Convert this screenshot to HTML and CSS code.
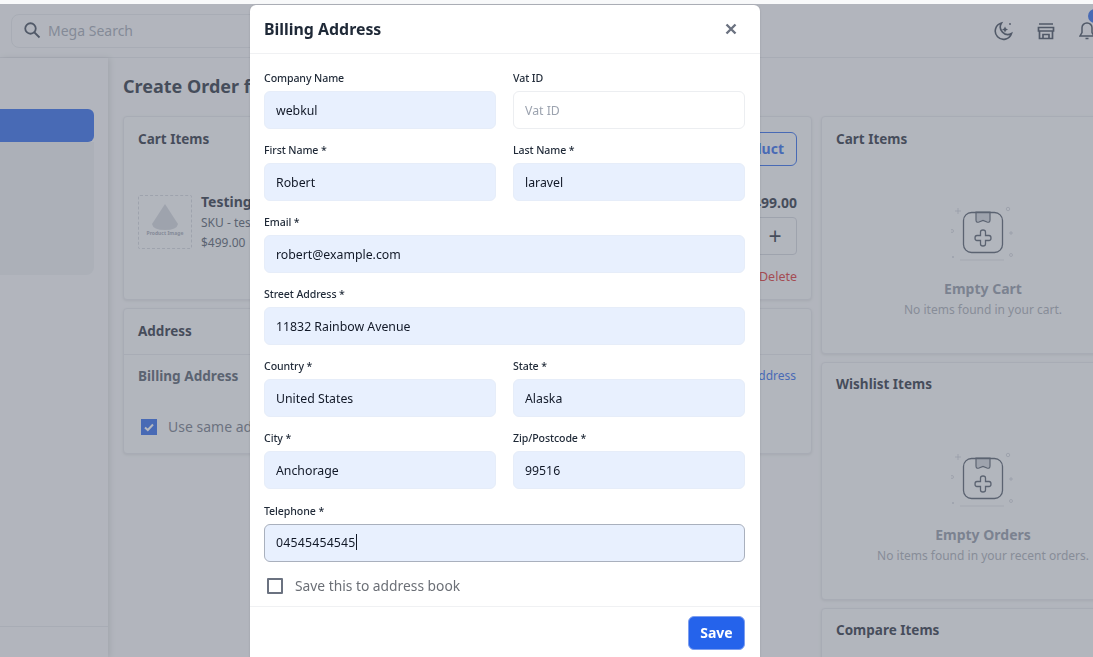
FILE: index.html
```html
<!DOCTYPE html>
<html lang="en">
<head>
  <meta charset="UTF-8">
  <meta name="viewport" content="width=device-width, initial-scale=1">
  <title>Create Order</title>
  <link rel="stylesheet" href="styles.css">
</head>
<body>
  <svg class="defs" width="0" height="0">
    <symbol id="empty-icon" viewBox="0 0 64 64">
      <g fill="none" stroke="#9ca3af" stroke-width="0.7" opacity="0.6">
        <path d="M7 6v6M4 9h6"/>
        <circle cx="57" cy="7" r="1.7"/>
        <circle cx="1" cy="29" r="1.5"/>
        <path d="M60 29v4M58 31h4"/>
        <circle cx="60" cy="53" r="1.5"/>
        <path d="M2 54v2M1 55h2"/>
      </g>
      <path d="M9 58h44" stroke="#e5e7eb" stroke-width="1.5" fill="none"/>
      <path d="M25 10h14v8q0 3-3 2l-4-1.500-4 1.500q-3 1-3-2z" fill="#d1d5db" stroke="#4b5563" stroke-width="1.200"/>
      <rect x="12.500" y="10.500" width="39" height="40" rx="8" fill="none" stroke="#4b5563" stroke-width="1.300"/>
      <path d="M29.500 30q0-2 2.500-2t2.500 2v3.500h3.500q2 0 2 2.500t-2 2.500h-3.500v3.500q0 2-2.500 2t-2.500-2v-3.500h-3.500q-2 0-2-2.500t2-2.500h3.500z" fill="none" stroke="#4b5563" stroke-width="1.300"/>
    </symbol>
  </svg>

  <div class="page">
    <header class="topbar">
      <div class="search">
        <svg width="18" height="18" viewBox="0 0 24 24" fill="none" stroke="#374151" stroke-width="2.400"><circle cx="10" cy="10" r="7"/><path d="M15 15l7 7"/></svg>
        <span>Mega Search</span>
      </div>
      <div class="topbar-icons">
        <svg width="20" height="20" viewBox="0 0 20 20" fill="none" stroke="#374151" stroke-width="1.600"><path d="M8.500 2a8.300 8.300 0 1 0 10 10.500A7.500 7.500 0 0 1 8.500 2z"/><path d="M12 5.500l1 2 2 1-2 1-1 2-1-2-2-1 2-1z" fill="#374151" stroke="none"/><circle cx="17" cy="3" r="0.900" fill="#374151" stroke="none"/></svg>
        <svg width="18" height="18" viewBox="0 0 18 18" fill="none" stroke="#374151" stroke-width="1.700"><path d="M2 2h14M1.500 5.500h15v3.500h-15zM2.500 9v7.500h13V9M6 16.500v-4h6v4"/></svg>
        <span class="bell">
          <svg width="16" height="20" viewBox="0 0 16 20" fill="none" stroke="#374151" stroke-width="1.500"><path d="M8 2a4.800 4.800 0 0 0-5 5v4.500L1 15h14l-2-3.500V7a4.800 4.800 0 0 0-5-5z"/><path d="M6.500 17.500h3"/></svg>
          <i class="badge"></i>
        </span>
      </div>
    </header>

    <div class="layout">
      <aside class="sidebar">
        <div class="menu">
          <div class="menu-active"></div>
          <div class="menu-sub"></div>
        </div>
        <div class="sidebar-foot"></div>
      </aside>

      <main class="content">
        <h1>Create Order for</h1>
        <div class="columns">
          <div class="col">
            <section class="card cart-card">
              <div class="cart-head">
                <h2>Cart Items</h2>
                <a class="btn-outline">Add Product</a>
              </div>
              <div class="cart-item">
                <div class="thumb">
                  <svg width="30" height="26" viewBox="0 0 30 26"><path d="M15 0L28 20q-1 6-13 6T2 20z" fill="#d1d5db"/></svg>
                  <span>Product Image</span>
                </div>
                <div class="item-info">
                  <strong>Testing</strong>
                  <span>SKU - test</span>
                  <span>$499.00</span>
                </div>
                <div class="item-side">
                  <strong>$499.00</strong>
                  <div class="stepper"><span></span><span>+</span></div>
                  <a class="delete">Delete</a>
                </div>
              </div>
            </section>

            <section class="card address-card">
              <h2 class="address-title">Address</h2>
              <div class="address-body">
                <div class="address-row">
                  <b>Billing Address</b>
                  <a>Add Address</a>
                </div>
                <div class="same-row">
                  <span class="checked"><svg width="12" height="12" viewBox="0 0 12 12" fill="none" stroke="#fff" stroke-width="2"><path d="M2 6.500l2.800 2.500L10 3.500"/></svg></span>
                  <span>Use same addr</span>
                </div>
              </div>
            </section>
          </div>

          <div class="col">
            <section class="card side-card">
              <h2>Cart Items</h2>
              <div class="empty">
                <svg width="64" height="64"><use href="#empty-icon"/></svg>
                <b>Empty Cart</b>
                <span>No items found in your cart.</span>
              </div>
            </section>
            <section class="card side-card">
              <h2>Wishlist Items</h2>
              <div class="empty">
                <svg width="64" height="64"><use href="#empty-icon"/></svg>
                <b>Empty Orders</b>
                <span>No items found in your recent orders.</span>
              </div>
            </section>
            <section class="card side-card">
              <h2>Compare Items</h2>
            </section>
          </div>
        </div>
      </main>
    </div>
  </div>

  <div class="overlay"></div>

  <form class="modal">
    <div class="modal-head">
      <h3>Billing Address</h3>
      <svg width="12" height="12" viewBox="0 0 12 12" stroke="#6b7280" stroke-width="2.400" fill="none"><path d="M1.500 1.500l9 9M10.500 1.500l-9 9"/></svg>
    </div>

    <div class="modal-body">
      <div class="field">
        <label>Company Name</label>
        <input class="filled" type="text" value="webkul">
      </div>
      <div class="field">
        <label>Vat ID</label>
        <input type="text" placeholder="Vat ID">
      </div>
      <div class="field">
        <label>First Name *</label>
        <input class="filled" type="text" value="Robert">
      </div>
      <div class="field">
        <label>Last Name *</label>
        <input class="filled" type="text" value="laravel">
      </div>
      <div class="field wide">
        <label>Email *</label>
        <input class="filled" type="text" value="robert@example.com">
      </div>
      <div class="field wide">
        <label>Street Address *</label>
        <input class="filled" type="text" value="11832 Rainbow Avenue">
      </div>
      <div class="field">
        <label>Country *</label>
        <input class="filled" type="text" value="United States">
      </div>
      <div class="field">
        <label>State *</label>
        <input class="filled" type="text" value="Alaska">
      </div>
      <div class="field">
        <label>City *</label>
        <input class="filled" type="text" value="Anchorage">
      </div>
      <div class="field">
        <label>Zip/Postcode *</label>
        <input class="filled" type="text" value="99516">
      </div>
      <div class="field wide">
        <label>Telephone *</label>
        <div class="focused">04545454545<i class="caret"></i></div>
      </div>
      <div class="save-row wide">
        <span class="box"></span>
        <span>Save this to address book</span>
      </div>
    </div>

    <div class="modal-foot">
      <button type="button">Save</button>
    </div>
  </form>
</body>
</html>
```

FILE: styles.css
```css
* {
  box-sizing: border-box;
}
html, body {
  height: 100%;
}
body {
  margin: 0;
  overflow: hidden;
  background: #f8f9fa;
  font-family: "Noto Sans", Arial, sans-serif;
  color: #111827;
}
h1, h2, h3 {
  margin: 0;
}
.defs {
  position: absolute;
}
.page {
  width: 1160px;
  margin-top: 4px;
}

/* top bar */
.topbar {
  display: flex;
  justify-content: space-between;
  align-items: center;
  height: 54px;
  padding: 0 65px 0 11px;
  border-bottom: 1px solid #e5e7eb;
}
.search {
  display: flex;
  align-items: center;
  gap: 7px;
  width: 400px;
  height: 34px;
  padding: 0 0 1px 11px;
  border: 1px solid #e5e7eb;
  border-radius: 8px;
  font-size: 14px;
  color: #9ca3af;
}
.topbar-icons {
  display: flex;
  align-items: center;
  gap: 24px;
}
.bell {
  position: relative;
  display: flex;
}
.badge {
  position: absolute;
  top: -12px;
  left: 9px;
  width: 14px;
  height: 14px;
  border-radius: 50%;
  background: #2563eb;
}

/* sidebar */
.layout {
  display: flex;
  height: 600px;
}
.sidebar {
  display: flex;
  flex-direction: column;
  justify-content: space-between;
  flex: none;
  width: 108px;
  padding-top: 51px;
  box-shadow: 2px 0 6px rgba(0,0,0,0.12);
}
.menu {
  width: 94px;
}
.menu-active {
  height: 33px;
  background: #2563eb;
  border-radius: 0 6px 6px 0;
}
.menu-sub {
  height: 133px;
  background: #eceef1;
  border-radius: 0 0 8px 0;
}
.sidebar-foot {
  height: 32px;
  border-top: 1px solid #e5e7eb;
}

/* main area */
.content {
  flex: 1;
  padding: 15px 15px 0;
}
h1 {
  font-size: 18px;
  font-weight: 700;
  line-height: 26px;
  white-space: nowrap;
  color: #1f2937;
}
.columns {
  display: grid;
  grid-template-columns: 689px 324px;
  gap: 9px;
  margin-top: 17px;
}
.col {
  display: flex;
  flex-direction: column;
  gap: 8px;
}
.card {
  padding: 13px 14px;
  background: #f9fafb;
  border: 1px solid #e5e7eb;
  border-radius: 4px;
  box-shadow: 0 1px 3px rgba(0,0,0,0.1);
}
h2 {
  font-size: 13.500px;
  font-weight: 700;
  line-height: 18px;
  color: #1f2937;
}
.cart-card {
  height: 184px;
}
.cart-head {
  display: flex;
  justify-content: space-between;
  align-items: flex-start;
}
.btn-outline {
  height: 34px;
  margin-top: 2px;
  padding: 0 12px;
  border: 1px solid #2563eb;
  border-radius: 6px;
  font-size: 14px;
  font-weight: 700;
  line-height: 32px;
  color: #2563eb;
}
.cart-item {
  display: flex;
  gap: 9px;
  margin-top: 29px;
}
.thumb {
  display: flex;
  flex-direction: column;
  align-items: center;
  flex: none;
  width: 54px;
  height: 54px;
  padding-top: 8px;
  border: 1px dashed #d1d5db;
  border-radius: 2px;
}
.thumb span {
  font-size: 5px;
  font-weight: 700;
  line-height: 7px;
  white-space: nowrap;
  color: #9ca3af;
}
.item-info {
  display: flex;
  flex-direction: column;
  flex: 1;
  font-size: 12px;
  line-height: 20.500px;
  color: #4b5563;
}
.item-info strong {
  margin-top: -3px;
  font-size: 14px;
  color: #1f2937;
}
.item-side {
  display: flex;
  flex-direction: column;
  align-items: flex-end;
}
.item-side strong {
  font-size: 14px;
  line-height: 16px;
  color: #1f2937;
}
.stepper {
  display: flex;
  height: 38px;
  margin-top: 6px;
  border: 1px solid #d1d5db;
  border-radius: 4px;
  font-size: 23px;
  line-height: 36px;
  color: #1f2937;
}
.stepper span {
  width: 42px;
  text-align: center;
}
.delete {
  margin-top: 12px;
  font-size: 12.500px;
  line-height: 20px;
  color: #dc2626;
}
.address-card {
  padding: 0;
  height: 146px;
}
.address-title {
  height: 46px;
  padding: 13px 14px 0;
  border-bottom: 1px solid #e5e7eb;
}
.address-body {
  padding: 11px 15px 0 14px;
}
.address-row {
  display: flex;
  justify-content: space-between;
  align-items: center;
  font-size: 13.600px;
  line-height: 20px;
  color: #4b5563;
}
.address-row a {
  font-size: 12px;
  color: #2563eb;
}
.same-row {
  display: flex;
  align-items: center;
  gap: 11px;
  margin: 31px 0 0 3px;
  font-size: 14px;
  color: #6b7280;
}
.checked {
  display: flex;
  align-items: center;
  justify-content: center;
  width: 16px;
  height: 16px;
  background: #2563eb;
}
.side-card {
  height: 238px;
  padding-top: 12px;
}
.side-card:first-child h2 {
  margin: 1px 0 -1px;
}
.empty {
  display: flex;
  flex-direction: column;
  align-items: center;
  margin-top: 55px;
  font-size: 12px;
  line-height: 18px;
  color: #a3a8b0;
}
.empty svg {
  flex: none;
}
.empty b {
  margin-top: 13px;
  margin-bottom: 2px;
  font-size: 14px;
  line-height: 20px;
  color: #8b93a1;
}

/* overlay + modal */
.overlay {
  position: fixed;
  inset: 4px 0 0 0;
  background: rgba(107,114,128,0.5);
}
.modal {
  position: fixed;
  top: 5px;
  left: 250px;
  width: 510px;
  background: #fff;
  border-radius: 6px 6px 0 0;
  box-shadow: 0 0 2px rgba(0,0,0,0.15);
}
.modal-head {
  display: flex;
  justify-content: space-between;
  align-items: center;
  height: 49px;
  padding: 0 23px 0 14px;
  border-bottom: 1px solid #f0f1f3;
}
h3 {
  font-size: 15.900px;
  font-weight: 700;
  color: #1f2937;
}
.modal-body {
  display: grid;
  grid-template-columns: 1fr 1fr;
  column-gap: 17px;
  row-gap: 13.100px;
  padding: 16px 15px 0 14px;
}
.wide {
  grid-column: 1 / 3;
}
.field {
  min-width: 0;
}
.field label {
  display: block;
  margin-bottom: 5px;
  font-size: 10.600px;
  font-weight: 500;
  letter-spacing: -0.100px;
  line-height: 16px;
  color: #1f2937;
}
.field input, .focused {
  display: block;
  width: 100%;
  height: 38px;
  padding: 0 11px;
  border: 1px solid #eceef1;
  border-radius: 6px;
  outline: none;
  background: #fff;
  font-family: inherit;
  font-size: 12.300px;
  line-height: 36px;
  color: #111827;
}
.field input::placeholder {
  color: #9ca3af;
}
.field .filled {
  background: #e8f0fe;
  border-color: #e6edf9;
}
.focused {
  background: #e8f0fe;
  border-color: #a9b0bd;
  letter-spacing: 0.200px;
}
.caret {
  display: inline-block;
  width: 1px;
  height: 16px;
  vertical-align: -3px;
  background: #111827;
}
.save-row {
  display: flex;
  align-items: center;
  gap: 12px;
  height: 20px;
  margin: 1px 0 0 3px;
  font-size: 13.800px;
  color: #6b6f76;
}
.box {
  width: 16px;
  height: 16px;
  border: 2px solid #6b7280;
  border-radius: 1px;
}
.modal-foot {
  display: flex;
  justify-content: flex-end;
  margin-top: 10px;
  padding: 9px 15px 9px;
  border-top: 1px solid #f0f1f3;
}
.modal-foot button {
  width: 57px;
  height: 34px;
  padding: 0 0 1px;
  border: 1px solid #7d9eef;
  border-radius: 6px;
  background: #2563eb;
  font-family: inherit;
  font-size: 14px;
  font-weight: 700;
  color: #fff;
}
```
